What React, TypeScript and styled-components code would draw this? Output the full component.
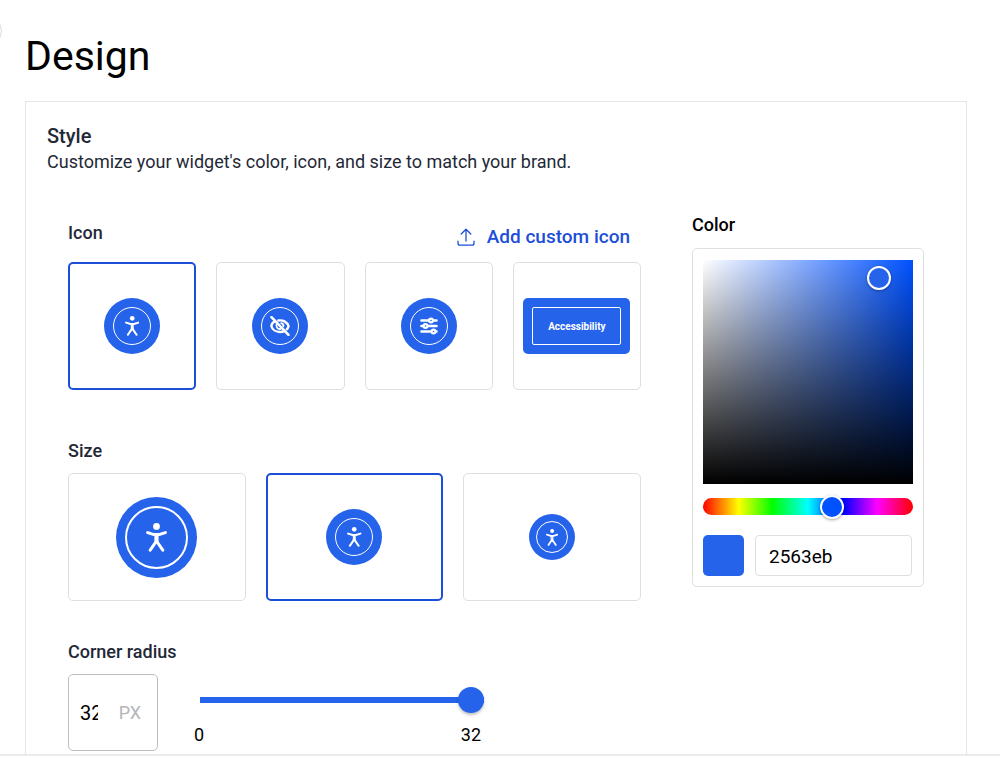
import React, { useState } from "react";
import styled, { createGlobalStyle } from "styled-components";

const BLUE = "#2563eb";
const ACCENT = "#1d4ed8";
const LINE = "#e5e5e7";

const GlobalStyle = createGlobalStyle`
  *, *::before, *::after { box-sizing: border-box; }
  body {
    margin: 0;
    background: #fff;
    color: #1f2937;
    font-family: Roboto, "Liberation Sans", sans-serif;
    font-size: 18px;
  }
  button, input { font: inherit; color: inherit; }
`;

const Shell = styled.div`
  display: flex;
  flex-direction: column;
  height: 100vh;
`;

const Main = styled.main`
  position: relative;
  flex: 1;
  min-height: 0;
  overflow: auto;
  scrollbar-width: none;
  padding: 32px 33px 0 25px;
`;

const CollapseButton = styled.button`
  position: absolute;
  top: 16px;
  left: -28px;
  width: 30px;
  height: 30px;
  padding: 0;
  border: 1px solid #dcdcdf;
  border-radius: 50%;
  background: #fff;
`;

const Footer = styled.footer`
  flex: none;
  height: 5px;
  border-top: 2px solid #ebebec;
  background: #fff;
`;

const PageTitle = styled.h1`
  margin: 0 0 21px;
  color: #000;
  font-size: 41px;
  font-weight: 400;
  line-height: 48px;
`;

const Panel = styled.section`
  padding: 21px 21px 42px;
  border: 1px solid ${LINE};
`;

const PanelTitle = styled.h2`
  margin: 0;
  font-size: 20px;
  font-weight: 500;
  line-height: 26px;
`;

const PanelText = styled.p`
  margin: 0;
  font-size: 18px;
  line-height: 26px;
`;

const Columns = styled.div`
  display: flex;
  align-items: flex-start;
  gap: 51px;
  padding: 38px 21px 0;
`;

const Options = styled.div`
  flex: 1;
  min-width: 0;
  padding-top: 8px;
`;

const Group = styled.div<{ $space?: number }>`
  margin-bottom: ${(p) => p.$space ?? 0}px;
`;

const GroupHead = styled.div<{ $height: number }>`
  display: flex;
  justify-content: space-between;
  align-items: flex-start;
  height: ${(p) => p.$height}px;
`;

const Heading = styled.span<{ $dark?: boolean }>`
  color: ${(p) => (p.$dark ? "#000" : "#1f2937")};
  font-size: 18px;
  font-weight: 500;
  line-height: 24px;
`;

const UploadButton = styled.button`
  display: flex;
  align-items: center;
  gap: 12px;
  margin: 4px 11px 0 0;
  padding: 0;
  border: 0;
  background: none;
  color: ${ACCENT};
  font-size: 19px;
  font-weight: 500;
  line-height: 24px;
  cursor: pointer;
`;

const Cards = styled.div<{ $count: number }>`
  display: grid;
  grid-template-columns: repeat(${(p) => p.$count}, minmax(0, 1fr));
  gap: 20px;
`;

const Card = styled.label`
  display: grid;
  grid-template: 128px / 100%;
  place-items: center;
  cursor: pointer;

  > * { grid-area: 1 / 1; }
`;

const CardRadio = styled.input`
  appearance: none;
  width: 100%;
  height: 100%;
  margin: 0;
  border: 1px solid #dfdfe2;
  border-radius: 5px;
  cursor: pointer;

  &:checked { border: 2px solid ${ACCENT}; }
`;

const Badge = styled.span<{ $size: number; $wide?: boolean }>`
  display: grid;
  width: ${(p) => (p.$wide ? 107 : p.$size)}px;
  height: ${(p) => p.$size}px;
  padding: ${(p) => (p.$size > 50 ? 9 : 7)}px;
  border-radius: ${(p) => (p.$wide ? "5px" : "50%")};
  background: ${BLUE};
  color: #fff;
  pointer-events: none;
`;

const Ring = styled.span<{ $thick?: boolean; $wide?: boolean }>`
  display: grid;
  place-items: center;
  border: ${(p) => (p.$thick ? 2 : 1)}px solid #fff;
  border-radius: ${(p) => (p.$wide ? "2px" : "50%")};
  font-size: 10px;
  font-weight: 700;
`;

const RadiusRow = styled.div`
  display: flex;
  align-items: flex-start;
  gap: 36px;
`;

const RadiusField = styled.label`
  display: flex;
  align-items: center;
  justify-content: space-between;
  width: 90px;
  height: 77px;
  padding: 0 16px 0 11px;
  border: 1px solid #bdbdc0;
  border-radius: 5px;
  color: #b5b5b8;
`;

const RadiusInput = styled.input`
  width: 18px;
  padding: 0;
  border: 0;
  outline: 0;
  background: none;
  color: #000;
  font-size: 20px;
`;

const SliderBlock = styled.div`
  width: 290px;
  padding-top: 13px;
`;

const RadiusSlider = styled.input`
  appearance: none;
  display: block;
  width: 284px;
  height: 26px;
  margin: 0 0 0 6px;
  background: linear-gradient(${BLUE}, ${BLUE}) center / 100% 6px no-repeat;
  border-radius: 3px;

  &::-webkit-slider-thumb {
    appearance: none;
    width: 26px;
    height: 26px;
    border-radius: 50%;
    background: ${BLUE};
    box-shadow: 0 2px 3px rgba(0, 0, 0, 0.25);
  }
`;

const Ticks = styled.div`
  display: flex;
  justify-content: space-between;
  padding: 10px 3px 0 0;
  color: #000;
  line-height: 24px;
`;

const ColorColumn = styled.div`
  flex: none;
  width: 232px;
`;

const Picker = styled.div`
  margin-top: 11px;
  padding: 11px 10px 10px;
  border: 1px solid #dfdfe2;
  border-radius: 5px;
`;

const Shade = styled.div`
  position: relative;
  height: 224px;
  background:
    linear-gradient(to top, #000, transparent),
    linear-gradient(to right, #fff, transparent),
    #0051ff;
`;

const ShadeKnob = styled.button`
  position: absolute;
  width: 24px;
  height: 24px;
  padding: 0;
  border: 2px solid #fff;
  border-radius: 50%;
  background: ${BLUE};
  box-shadow: 0 1px 3px rgba(0, 0, 0, 0.3);
  transform: translate(-50%, -50%);
`;

const HueTrack = styled.div`
  display: flex;
  height: 17px;
  margin: 14px 0 20px;
  border-radius: 9px;
  background: linear-gradient(to right, #f00 0%, #ff0 17%, #0f0 33%, #0ff 50%, #00f 67%, #f0f 83%, #f00 100%);
`;

const HueSlider = styled.input`
  appearance: none;
  flex: 1;
  min-width: 0;
  height: 17px;
  margin: 0 -12px;
  background: none;

  &::-webkit-slider-thumb {
    appearance: none;
    width: 24px;
    height: 24px;
    border: 2px solid #fff;
    border-radius: 50%;
    background: #0051ff;
    box-shadow: 0 1px 3px rgba(0, 0, 0, 0.35);
  }
`;

const HexRow = styled.div`
  display: flex;
  gap: 11px;
`;

const Swatch = styled.span`
  flex: none;
  width: 41px;
  height: 41px;
  border-radius: 5px;
  background: ${BLUE};
`;

const HexInput = styled.input`
  flex: 1;
  min-width: 0;
  height: 41px;
  margin-right: 1px;
  padding: 2px 13px 0;
  border: 1px solid #dfdfe2;
  border-radius: 4px;
  background: #fff;
  color: #000;
  font-size: 19px;
`;

const PersonIcon = ({ height }: { height: number }) => (
  <svg height={height} viewBox="0 0 21 29" fill="none" stroke="currentColor" strokeWidth="3" strokeLinecap="round" strokeLinejoin="round" aria-hidden="true">
    <circle cx="10.5" cy="3.4" r="3.4" fill="currentColor" stroke="none" />
    <path d="M1.6 9.6 8 11.6H13L19.4 9.6" />
    <path d="M4.2 27.2 10.5 18 16.8 27.2" />
    <path d="M9.2 12H11.8V18.5H9.2Z" fill="currentColor" strokeWidth="1.6" />
  </svg>
);

const HiddenIcon = () => (
  <svg width="20" height="20" viewBox="0 0 20 20" fill="none" stroke="currentColor" strokeWidth="2.4" strokeLinecap="round" strokeLinejoin="round" aria-hidden="true">
    <path d="M4.4 5.6C2.5 6.8 1.4 8.5 1.4 10.2 2.3 13.6 5.8 16 10 16 11.6 16 13 15.7 14.3 15.1" />
    <path d="M8.3 4.5C13.2 3.700 17.600 6.300 18.600 10.200 18.300 11.500 17.600 12.500 16.700 13.300" />
    <path d="M6.600 8.400C5.800 11 7.500 13.200 10.200 13" strokeWidth="1.8" />
    <path d="M11.200 7.200C12.800 7.600 13.600 8.800 13.400 10.300" strokeWidth="1.8" />
    <path d="M1.500 1.200 18.500 18.800" strokeWidth="2.6" />
  </svg>
);

const TuneIcon = () => (
  <svg width="18" height="18" viewBox="0 0 18 18" fill="none" stroke="currentColor" strokeLinecap="round" aria-hidden="true">
    <path d="M1.500 3.500H16.500M1.500 9H16.500M1.500 14.500H16.500" strokeWidth="2.600" />
    <g fill={BLUE} strokeWidth="2.200">
      <circle cx="11" cy="3.500" r="1.900" />
      <circle cx="5.500" cy="9" r="1.900" />
      <circle cx="13.500" cy="14.500" r="1.900" />
    </g>
  </svg>
);

const UploadIcon = () => (
  <svg width="18" height="18" viewBox="0 0 18 18" fill="none" stroke="currentColor" strokeWidth="1.300" strokeLinecap="round" strokeLinejoin="round" aria-hidden="true">
    <path d="M9 13V1.200M4.200 6 9 1.200 13.800 6" />
    <path d="M1 13.200V15.200Q1 17.200 3 17.200H15Q17 17.200 17 15.200V13.200" />
  </svg>
);

const ICONS = [
  { id: "person", label: "Person", art: <PersonIcon height={20} /> },
  { id: "hidden", label: "Hidden eye", art: <HiddenIcon /> },
  { id: "tune", label: "Sliders", art: <TuneIcon /> },
  { id: "text", label: "Text", art: "Accessibility", wide: true },
];

const SIZES = [
  { id: "large", badge: 81, art: 29 },
  { id: "medium", badge: 56, art: 20 },
  { id: "small", badge: 46, art: 17 },
];

export default function App() {
  const [icon, setIcon] = useState("person");
  const [size, setSize] = useState("medium");
  const [radius, setRadius] = useState("32");
  const [hue, setHue] = useState("221");
  const [hex, setHex] = useState("2563eb");

  return (
    <Shell>
      <GlobalStyle />
      <Main>
        <CollapseButton type="button" aria-label="Collapse menu" />
        <PageTitle>Design</PageTitle>
        <Panel>
          <PanelTitle>Style</PanelTitle>
          <PanelText>Customize your widget's color, icon, and size to match your brand.</PanelText>
          <Columns>
            <Options>
              <Group $space={49} role="radiogroup" aria-labelledby="icon-heading">
                <GroupHead $height={41}>
                  <Heading id="icon-heading">Icon</Heading>
                  <UploadButton type="button">
                    <UploadIcon />
                    Add custom icon
                  </UploadButton>
                </GroupHead>
                <Cards $count={4}>
                  {ICONS.map((o) => (
                    <Card key={o.id}>
                      <CardRadio type="radio" name="icon" aria-label={o.label} checked={icon === o.id} onChange={() => setIcon(o.id)} />
                      <Badge $size={56} $wide={o.wide}>
                        <Ring $wide={o.wide}>{o.art}</Ring>
                      </Badge>
                    </Card>
                  ))}
                </Cards>
              </Group>
              <Group $space={39} role="radiogroup" aria-labelledby="size-heading">
                <GroupHead $height={34}>
                  <Heading id="size-heading">Size</Heading>
                </GroupHead>
                <Cards $count={3}>
                  {SIZES.map((o) => (
                    <Card key={o.id}>
                      <CardRadio type="radio" name="size" aria-label={o.id} checked={size === o.id} onChange={() => setSize(o.id)} />
                      <Badge $size={o.badge}>
                        <Ring $thick={o.badge > 60}>
                          <PersonIcon height={o.art} />
                        </Ring>
                      </Badge>
                    </Card>
                  ))}
                </Cards>
              </Group>
              <Group>
                <GroupHead $height={34}>
                  <Heading id="radius-heading">Corner radius</Heading>
                </GroupHead>
                <RadiusRow>
                  <RadiusField>
                    <RadiusInput type="text" inputMode="numeric" aria-labelledby="radius-heading" value={radius} onChange={(e) => setRadius(e.target.value)} />
                    PX
                  </RadiusField>
                  <SliderBlock>
                    <RadiusSlider type="range" min="0" max="32" aria-labelledby="radius-heading" value={radius} onChange={(e) => setRadius(e.target.value)} />
                    <Ticks>
                      <span>0</span>
                      <span>32</span>
                    </Ticks>
                  </SliderBlock>
                </RadiusRow>
              </Group>
            </Options>
            <ColorColumn>
              <Heading as="label" htmlFor="hex" $dark>Color</Heading>
              <Picker>
                <Shade>
                  <ShadeKnob type="button" aria-label="Shade" style={{ left: "84%", top: "8%" }} />
                </Shade>
                <HueTrack>
                  <HueSlider type="range" min="0" max="360" aria-label="Hue" value={hue} onChange={(e) => setHue(e.target.value)} />
                </HueTrack>
                <HexRow>
                  <Swatch />
                  <HexInput id="hex" type="text" value={hex} onChange={(e) => setHex(e.target.value)} />
                </HexRow>
              </Picker>
            </ColorColumn>
          </Columns>
        </Panel>
      </Main>
      <Footer />
    </Shell>
  );
}
